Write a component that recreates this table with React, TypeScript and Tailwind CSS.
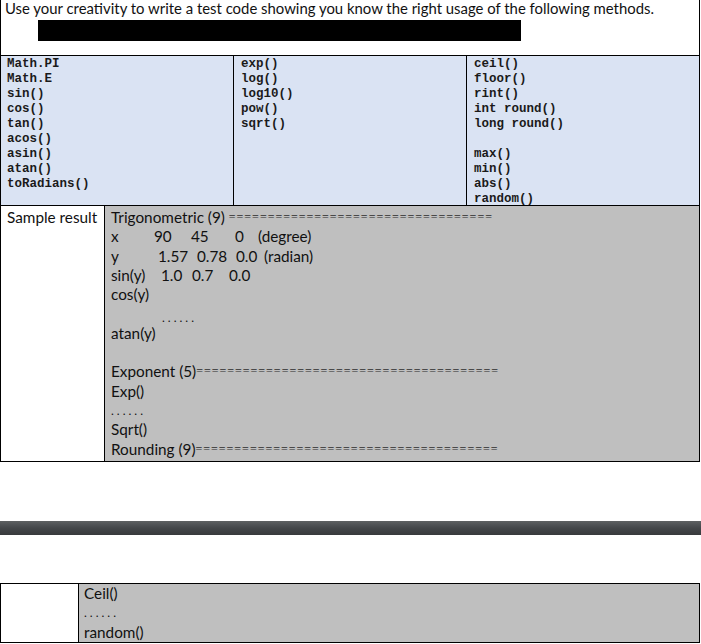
import type { ReactNode } from 'react';

const body = { fontFamily: 'Lato, "Open Sans", "Liberation Sans", sans-serif' };
const mono = { fontFamily: '"Liberation Mono", "Courier New", monospace' };
const serif = { fontFamily: '"Liberation Serif", serif' };

const EQ = (n: number) => '='.repeat(n);

function Code({ items }: { items: string[] }) {
  return (
    <div className="text-[12.5px] font-bold leading-[15px] text-[#1a1a1a]" style={mono}>
      {items.map((s, i) => (
        <div key={i} className="h-[15px] whitespace-pre">
          {s}
        </div>
      ))}
    </div>
  );
}

function Line({ children }: { children: ReactNode }) {
  return <div className="flex h-[19.3px] items-center whitespace-pre">{children}</div>;
}

function Cell({ w, children }: { w: string; children: ReactNode }) {
  return <span className={`inline-block ${w}`}>{children}</span>;
}

function Dots({ className = '' }: { className?: string }) {
  return <span className={`tracking-[3px] text-[12px] ${className}`}>......</span>;
}

function Rule({ n }: { n: number }) {
  return (
    <span className="text-[12px] tracking-[1px] text-[#2e2e2e]" style={serif}>
      {EQ(n)}
    </span>
  );
}

export default function App() {
  return (
    <div className="h-[644px] w-[701px] bg-white text-[#111]" style={body}>
      <div className="w-[700px] border-x border-b border-black">
        <div className="h-[56px] border-b border-black">
          <div className="pl-[4px] text-[14.9px] leading-[16px]">
            Use your creativity to write a test code showing you know the right usage of the following methods.
          </div>
          <div className="ml-[37px] mt-[4px] h-[21px] w-[483px] bg-black" />
        </div>

        <div className="grid h-[150px] grid-cols-[233px_233px_1fr] border-b border-black bg-[#dae3f3]">
          <div className="border-r border-black pl-[6px] pt-[1px]">
            <Code items={['Math.PI', 'Math.E', 'sin()', 'cos()', 'tan()', 'acos()', 'asin()', 'atan()', 'toRadians()']} />
          </div>
          <div className="border-r border-black pl-[7px] pt-[1px]">
            <Code items={['exp()', 'log()', 'log10()', 'pow()', 'sqrt()']} />
          </div>
          <div className="pl-[7px] pt-[1px]">
            <Code items={['ceil()', 'floor()', 'rint()', 'int round()', 'long round()', '', 'max()', 'min()', 'abs()', 'random()']} />
          </div>
        </div>

        <div className="grid h-[255px] grid-cols-[104px_1fr] text-[15.3px] leading-[19.3px]">
          <div className="border-r border-black pl-[6px] pt-[2px]">Sample result</div>
          <div className="bg-[#bfbfbf] pl-[6px] pt-[2px]">
            <Line>
              Trigonometric (9) <Rule n={34} />
            </Line>
            <Line>
              <Cell w="w-[43px]">x</Cell>
              <Cell w="w-[37px]">90</Cell>
              <Cell w="w-[44px]">45</Cell>
              <Cell w="w-[23px]">0</Cell>
              <span>(degree)</span>
            </Line>
            <Line>
              <Cell w="w-[47px]">y</Cell>
              <Cell w="w-[39px]">1.57</Cell>
              <Cell w="w-[39px]">0.78</Cell>
              <Cell w="w-[28px]">0.0</Cell>
              <span>(radian)</span>
            </Line>
            <Line>
              <Cell w="w-[50px]">sin(y)</Cell>
              <Cell w="w-[31px]">1.0</Cell>
              <Cell w="w-[37px]">0.7</Cell>
              <span>0.0</span>
            </Line>
            <Line>cos(y)</Line>
            <Line>
              <span className="pl-[51px] pt-[6px]">
                <Dots />
              </span>
            </Line>
            <Line>atan(y)</Line>
            <Line> </Line>
            <Line>
              Exponent (5)
              <Rule n={39} />
            </Line>
            <Line>Exp()</Line>
            <Line>
              <Dots />
            </Line>
            <Line>Sqrt()</Line>
            <Line>
              Rounding (9)
              <Rule n={39} />
            </Line>
          </div>
        </div>
      </div>

      <div className="mt-[59px] h-[14px] w-[701px] bg-gradient-to-b from-[#5e6163] via-[#44474a] to-[#383a3c]" />

      <div className="mt-[48px] grid h-[60px] w-[700px] grid-cols-[78px_1fr] border border-black text-[15.3px] leading-[19.3px]">
        <div className="border-r border-black" />
        <div className="bg-[#bfbfbf] pl-[5px]">
          <Line>Ceil()</Line>
          <Line>
            <Dots />
          </Line>
          <Line>random()</Line>
        </div>
      </div>
    </div>
  );
}
